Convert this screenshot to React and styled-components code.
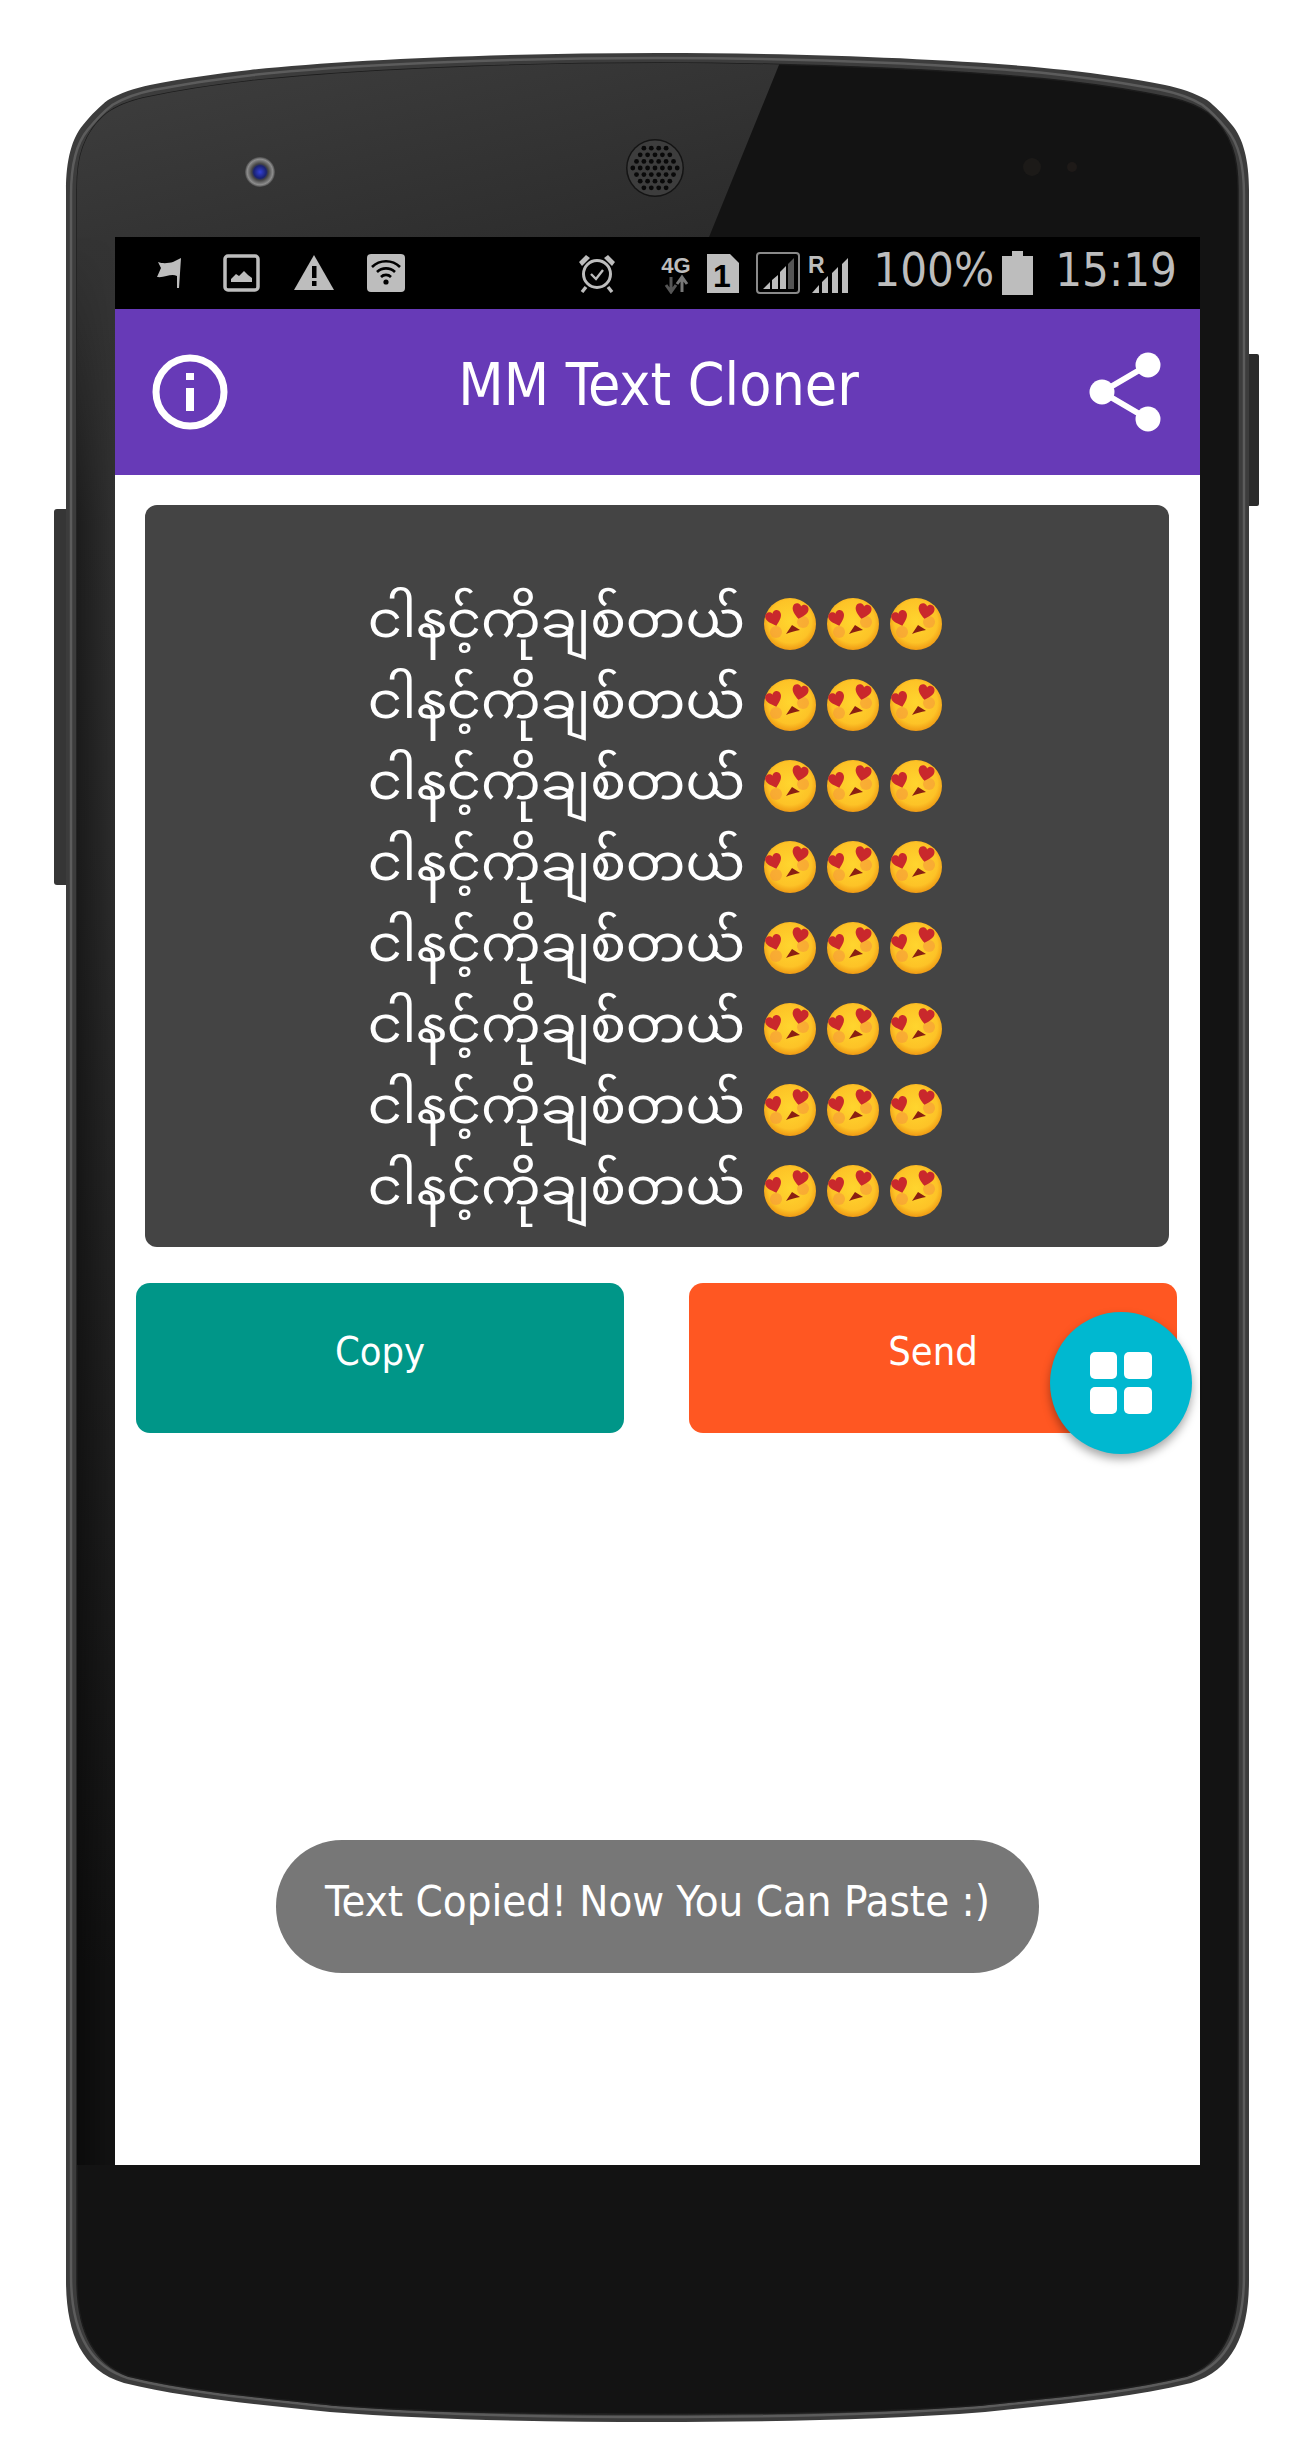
import styled, { createGlobalStyle } from 'styled-components';

const GlobalStyle = createGlobalStyle`
  html, body { margin: 0; padding: 0; background: #fff; }
  body { font-family: "DejaVu Sans Condensed", "DejaVu Sans", sans-serif; }
`;

const Stage = styled.div`
  position: relative;
  width: 1293px;
  height: 2456px;
  box-sizing: border-box;
  padding: 237px 93px 291px 115px;
  background: #fff;
`;

const DeviceArt = styled.svg`
  position: absolute;
  inset: 0;
  width: 1293px;
  height: 2456px;
`;

const Screen = styled.div`
  position: relative;
  height: 100%;
  display: flex;
  flex-direction: column;
  background: #fff;
`;

const StatusBar = styled.div`
  height: 72px;
  flex: none;
  display: flex;
  align-items: center;
  justify-content: space-between;
  padding: 0 23px 0 42px;
  background: #000;
  color: #bdbdbd;
`;

const StatusGroup = styled.div`
  display: flex;
  align-items: center;
`;

const IconSlot = styled.span`
  display: flex;
  margin-left: ${(p) => p.$left || 0}px;
`;

const StatusText = styled.span`
  margin: -6px ${(p) => p.$right || 0}px 0 ${(p) => p.$left || 0}px;
  font-size: 47px;
  line-height: 72px;
`;

const AppBar = styled.header`
  height: 166px;
  flex: none;
  display: flex;
  align-items: center;
  justify-content: space-between;
  padding: 0 39px 0 37px;
  background: #673ab7;
  color: #fff;
`;

const Title = styled.h1`
  margin: -14px 0 0;
  font-size: 58.5px;
  font-weight: 400;
  line-height: 1;
`;

const Content = styled.main`
  flex: 1;
  padding: 30px 23px 0 21px;
`;

const TextPanel = styled.div`
  height: 742px;
  box-sizing: border-box;
  margin: 0 8px 0 9px;
  padding: 78px 0 14px;
  border-radius: 12px;
  background: #444;
  color: #fff;
`;

const LoveLine = styled.div`
  height: 81px;
  box-sizing: border-box;
  padding-right: 4px;
  display: flex;
  align-items: center;
  justify-content: center;
  gap: 19px;
  font-family: "Noto Sans Myanmar", "Padauk", "Myanmar Text", "DejaVu Sans", sans-serif;
  font-size: 53px;
  line-height: 81px;
`;

const LoveText = styled.span`
  display: inline-block;
  transform: translateY(3px) scaleY(0.93);
`;

const Emojis = styled.span`
  display: flex;
  gap: 11px;
`;

const Buttons = styled.div`
  display: flex;
  justify-content: space-between;
  margin-top: 36px;
`;

const ActionButton = styled.button`
  width: 488px;
  height: 150px;
  border: 0;
  padding: 0 0 14px;
  border-radius: 14px;
  background: ${(p) => p.$bg};
  color: #fff;
  font-family: inherit;
  font-size: 39.5px;
`;

const Fab = styled.button`
  position: absolute;
  left: 935px;
  top: 1075px;
  width: 142px;
  height: 142px;
  border: 0;
  padding: 0;
  display: grid;
  place-items: center;
  border-radius: 50%;
  background: #00b8d0;
  box-shadow: 0 5px 10px rgba(0, 0, 0, 0.35);
`;

const Toast = styled.div`
  position: absolute;
  left: 161px;
  bottom: 192px;
  width: 763px;
  height: 133px;
  box-sizing: border-box;
  padding-bottom: 12px;
  display: flex;
  align-items: center;
  justify-content: center;
  border-radius: 66px;
  background: #777;
  color: #fff;
  font-size: 43.4px;
`;

// phone silhouette, left half traced from the reference and mirrored around x=657.5
const BODY = 'M66 190 C66 160 72 138 83 125 C92 114 100 106 108 100 C120 93 135 88 150 85 C185 78 215 74 250 70 C340 60 500 53 657.5 53 C815 53 975 60 1065 70 C1100 74 1130 78 1165 85 C1180 88 1195 93 1207 100 C1215 106 1223 114 1232 125 C1243 138 1249 160 1249 190 L1249 2280 C1249 2330 1235 2370 1191 2383 C1130 2398 1060 2404 985 2412 C885 2420 765 2422 657.5 2422 C550 2422 430 2420 330 2412 C255 2404 185 2398 124 2383 C80 2370 66 2330 66 2280 Z';
const INNER = 'M77 190 C77 170 79 158 83 147 C88 133 96 122 107 113 C117 106 130 101 143 98 C180 90 215 85 250 81 C340 71 500 63 657.5 63 C815 63 975 71 1065 81 C1100 85 1135 90 1172 98 C1185 101 1198 106 1208 113 C1219 122 1227 133 1232 147 C1236 158 1238 170 1238 190 L1238 2280 C1238 2325 1225 2362 1187 2376 C1125 2391 1057 2397 983 2405 C885 2413 765 2414 657.5 2414 C550 2414 430 2413 332 2405 C258 2397 190 2391 128 2376 C90 2362 77 2325 77 2280 Z';

const HOLES = [];
for (let row = -3; row <= 3; row++) {
  for (let col = -4; col <= 4; col++) {
    const x = col * 7.4 + (row % 2 ? 3.7 : 0);
    const y = row * 6.6;
    if (Math.hypot(x, y) < 24) HOLES.push([x, y]);
  }
}

const Device = () => (
  <DeviceArt viewBox="0 0 1293 2456" aria-hidden="true">
    <defs>
      <linearGradient id="stripFade" x1="0" x2="0" y1="0" y2="1">
        <stop offset="0" stopColor="#343434" />
        <stop offset="0.35" stopColor="#2b2b2b" />
        <stop offset="0.9" stopColor="#131313" />
      </linearGradient>
      <linearGradient id="stripShade" x1="0" x2="1" y1="0" y2="0">
        <stop offset="0" stopColor="#000" stopOpacity="0.4" />
        <stop offset="1" stopColor="#000" stopOpacity="0" />
      </linearGradient>
      <linearGradient id="shadeIn" x1="0" x2="0" y1="0" y2="1">
        <stop offset="0" stopColor="#000" />
        <stop offset="0.15" stopColor="#fff" />
      </linearGradient>
      <mask id="shadeMask">
        <rect x="77" y="237" width="38" height="1928" fill="url(#shadeIn)" />
      </mask>
      <linearGradient id="glare" x1="0" x2="1" y1="0" y2="1">
        <stop offset="0" stopColor="#3f3f3f" />
        <stop offset="1" stopColor="#2a2a2a" />
      </linearGradient>
      <clipPath id="innerClip"><path d={INNER} /></clipPath>
      <radialGradient id="lens">
        <stop offset="0" stopColor="#3340d8" />
        <stop offset="0.42" stopColor="#1a2270" />
        <stop offset="0.55" stopColor="#444" />
        <stop offset="0.85" stopColor="#8d8d8d" />
        <stop offset="1" stopColor="#4a4a4a" />
      </radialGradient>
      <radialGradient id="faceFill" cx="0.5" cy="0.45" r="0.55">
        <stop offset="0" stopColor="#ffd52e" />
        <stop offset="0.75" stopColor="#fdc327" />
        <stop offset="1" stopColor="#ef9a14" />
      </radialGradient>
    </defs>
    <rect x="54" y="509" width="16" height="376" rx="3" fill="#363636" />
    <rect x="1245" y="354" width="14" height="152" rx="2" fill="#2b2b2b" />
    <path d={BODY} fill="#3c3c3c" />
    <path
      d={BODY}
      fill="none"
      stroke="#5c5c5c"
      strokeWidth="2.5"
      transform="translate(657.5 1237.5) scale(.9915 .9958) translate(-657.5 -1237.5)"
    />
    <path d={INNER} fill="#131313" stroke="#1c1c1c" strokeWidth="1.5" />
    <g clipPath="url(#innerClip)">
      <polygon points="77,55 783,55 709,237 77,237" fill="url(#glare)" />
      <rect x="77" y="237" width="38" height="1928" fill="url(#stripFade)" />
      <rect x="77" y="237" width="38" height="1928" fill="url(#stripShade)" mask="url(#shadeMask)" />
    </g>
    <circle cx="260" cy="172" r="15" fill="url(#lens)" />
    <circle cx="655" cy="168" r="29" fill="#141414" />
    <circle cx="655" cy="168" r="27.5" fill="#3d3d3d" />
    {HOLES.map(([x, y]) => (
      <circle key={`${x},${y}`} cx={655 + x} cy={168 + y} r="2.4" fill="#090909" />
    ))}
    <circle cx="1032" cy="167" r="9" fill="#1c1a18" />
    <circle cx="1072" cy="167" r="5" fill="#1e1a18" />
  </DeviceArt>
);

const FlagIcon = () => (
  <svg width="24" height="30" viewBox="0 0 24 30">
    <path d="M0 19 L4 10 L1 4 C6 6 12 5 16 4 L24 0 L22 30 L20 30 L20 18 C14 15 8 20 0 19 Z" fill="#bdbdbd" />
  </svg>
);

const ImageIcon = () => (
  <svg width="37" height="38" viewBox="0 0 37 38">
    <rect x="2" y="2" width="33" height="34" rx="3" fill="none" stroke="#bdbdbd" strokeWidth="3.5" />
    <path d="M8 28 L8 25 L13 20 L16 22 L21 17 L25 21 L29 24 L29 28 Z" fill="#bdbdbd" />
  </svg>
);

const WarnIcon = () => (
  <svg width="40" height="36" viewBox="0 0 40 36">
    <path d="M20 0 L40 35 L0 35 Z" fill="#bdbdbd" />
    <rect x="18" y="11" width="4.5" height="12" fill="#000" />
    <rect x="18" y="26" width="4.5" height="5" fill="#000" />
  </svg>
);

const WifiIcon = () => (
  <svg width="38" height="38" viewBox="0 0 38 38">
    <rect width="38" height="38" rx="4" fill="#bdbdbd" />
    <g fill="none" stroke="#000" strokeWidth="2.6">
      <path d="M5 13 A20 20 0 0 1 33 13" />
      <path d="M10 18 A13 13 0 0 1 28 18" />
      <path d="M14 23 A7 7 0 0 1 24 23" />
    </g>
    <circle cx="19" cy="28" r="2.6" fill="#000" />
  </svg>
);

const AlarmIcon = () => (
  <svg width="38" height="40" viewBox="0 0 38 40">
    <circle cx="19" cy="21" r="13.5" fill="none" stroke="#bdbdbd" strokeWidth="3" />
    <path d="M13 21 L18 26 L25 17" fill="none" stroke="#bdbdbd" strokeWidth="2.4" />
    <path d="M1 9 L8 2 L12 5 L4 13 Z M37 9 L30 2 L26 5 L34 13 Z" fill="#bdbdbd" />
    <path d="M8 34 L4 39 M30 34 L34 39" stroke="#bdbdbd" strokeWidth="3.4" />
  </svg>
);

const NetworkIcon = () => (
  <svg width="34" height="42" viewBox="0 0 34 42">
    <text x="17" y="21" textAnchor="middle" fontFamily="Liberation Sans, sans-serif" fontWeight="700" fontSize="22" fill="#bdbdbd">4G</text>
    <path d="M12 25 L12 38 M7 33 L12 40 L17 33" fill="none" stroke="#555" strokeWidth="3" />
    <path d="M23 40 L23 27 M18 32 L23 25 L28 32" fill="none" stroke="#777" strokeWidth="3" />
  </svg>
);

const SimIcon = () => (
  <svg width="32" height="39" viewBox="0 0 32 39">
    <path d="M0 0 L23 0 L32 9 L32 39 L0 39 Z" fill="#bdbdbd" />
    <text x="15" y="33" textAnchor="middle" fontFamily="Liberation Sans, sans-serif" fontWeight="700" fontSize="32" fill="#000">1</text>
  </svg>
);

const SignalBoxIcon = () => (
  <svg width="44" height="42" viewBox="0 0 44 42">
    <rect x="1" y="1" width="42" height="40" rx="3" fill="none" stroke="#8a8a8a" strokeWidth="2" />
    <path d="M7 37 L14 37 L14 30 Z M16 37 L22 37 L22 23 L16 28 Z" fill="#bdbdbd" />
    <path d="M24 37 L30 37 L30 14 L24 20 Z" fill="#bdbdbd" />
    <path d="M32 37 L38 37 L38 6 L32 12 Z" fill="#555" />
  </svg>
);

const RoamingIcon = () => (
  <svg width="43" height="42" viewBox="0 0 43 42">
    <text x="0" y="21" fontFamily="Liberation Sans, sans-serif" fontWeight="700" fontSize="23" fill="#bdbdbd">R</text>
    <path d="M4 41 L11 41 L11 33 Z M14 41 L20 41 L20 24 L14 30 Z M24 41 L30 41 L30 15 L24 21 Z M34 41 L40 41 L40 6 L34 12 Z" fill="#bdbdbd" />
  </svg>
);

const BatteryIcon = () => (
  <svg width="31" height="44" viewBox="0 0 31 44">
    <path d="M10 0 L21 0 L21 5 L31 5 L31 44 L0 44 L0 5 L10 5 Z" fill="#bdbdbd" />
  </svg>
);

const InfoIcon = () => (
  <svg width="76" height="76" viewBox="0 0 76 76">
    <circle cx="38" cy="38" r="34" fill="none" stroke="#fff" strokeWidth="7" />
    <rect x="34" y="19" width="8" height="7" fill="#fff" />
    <rect x="34" y="34" width="8" height="23" fill="#fff" />
  </svg>
);

const ShareIcon = () => (
  <svg width="72" height="80" viewBox="0 0 72 80">
    <path d="M13 40 L59 13 M13 40 L59 67" fill="none" stroke="#fff" strokeWidth="6" />
    <circle cx="59" cy="13" r="12.5" fill="#fff" />
    <circle cx="13" cy="40" r="12.5" fill="#fff" />
    <circle cx="59" cy="67" r="12.5" fill="#fff" />
  </svg>
);

const GridIcon = () => (
  <svg width="62" height="62" viewBox="0 0 62 62">
    <rect x="0" y="0" width="27" height="27" rx="5" fill="#fff" />
    <rect x="34" y="0" width="28" height="27" rx="5" fill="#fff" />
    <rect x="0" y="35" width="27" height="27" rx="5" fill="#fff" />
    <rect x="34" y="35" width="28" height="27" rx="5" fill="#fff" />
  </svg>
);

const HEART = 'M8 15 C3 11 0 8 0 4.5 C0 1.5 2.2 0 4.2 0 C6 0 7.4 1 8 2.5 C8.6 1 10 0 11.8 0 C13.8 0 16 1.5 16 4.5 C16 8 13 11 8 15 Z';

const HeartEyes = () => (
  <svg width="52" height="52" viewBox="0 0 52 52" role="img" aria-label="😍">
    <circle cx="26" cy="26" r="26" fill="url(#faceFill)" />
    <circle cx="39" cy="24" r="6" fill="#f59a3a" opacity="0.6" />
    <circle cx="12" cy="34" r="6" fill="#f59a3a" opacity="0.6" />
    <path d={HEART} fill="#c9282c" transform="translate(2 13) rotate(-18 8 7.5)" />
    <path d={HEART} fill="#c9282c" transform="translate(28 6) rotate(12 8 7.5)" />
    <path d="M22 36 L28 27 L36 32 C31 33 26 34 22 36 Z" fill="#8a1f12" />
  </svg>
);

const LINES = Array.from({ length: 8 }, (_, i) => i);

export default function App() {
  return (
    <>
      <GlobalStyle />
      <Stage>
        <Device />
        <Screen>
          <StatusBar>
            <StatusGroup>
              <FlagIcon />
              <IconSlot $left={42}><ImageIcon /></IconSlot>
              <IconSlot $left={34}><WarnIcon /></IconSlot>
              <IconSlot $left={33}><WifiIcon /></IconSlot>
            </StatusGroup>
            <StatusGroup>
              <AlarmIcon />
              <IconSlot $left={43}><NetworkIcon /></IconSlot>
              <IconSlot $left={14}><SimIcon /></IconSlot>
              <IconSlot $left={17}><SignalBoxIcon /></IconSlot>
              <IconSlot $left={8}><RoamingIcon /></IconSlot>
              <StatusText $left={22} $right={8}>100%</StatusText>
              <BatteryIcon />
              <StatusText $left={22}>15:19</StatusText>
            </StatusGroup>
          </StatusBar>
          <AppBar>
            <InfoIcon />
            <Title>MM Text Cloner</Title>
            <ShareIcon />
          </AppBar>
          <Content>
            <TextPanel>
              {LINES.map((i) => (
                <LoveLine key={i}>
                  <LoveText>ငါနင့်ကိုချစ်တယ်</LoveText>
                  <Emojis>
                    <HeartEyes />
                    <HeartEyes />
                    <HeartEyes />
                  </Emojis>
                </LoveLine>
              ))}
            </TextPanel>
            <Buttons>
              <ActionButton $bg="#009688">Copy</ActionButton>
              <ActionButton $bg="#ff5722">Send</ActionButton>
            </Buttons>
          </Content>
          <Fab><GridIcon /></Fab>
          <Toast>Text Copied! Now You Can Paste :)</Toast>
        </Screen>
      </Stage>
    </>
  );
}
